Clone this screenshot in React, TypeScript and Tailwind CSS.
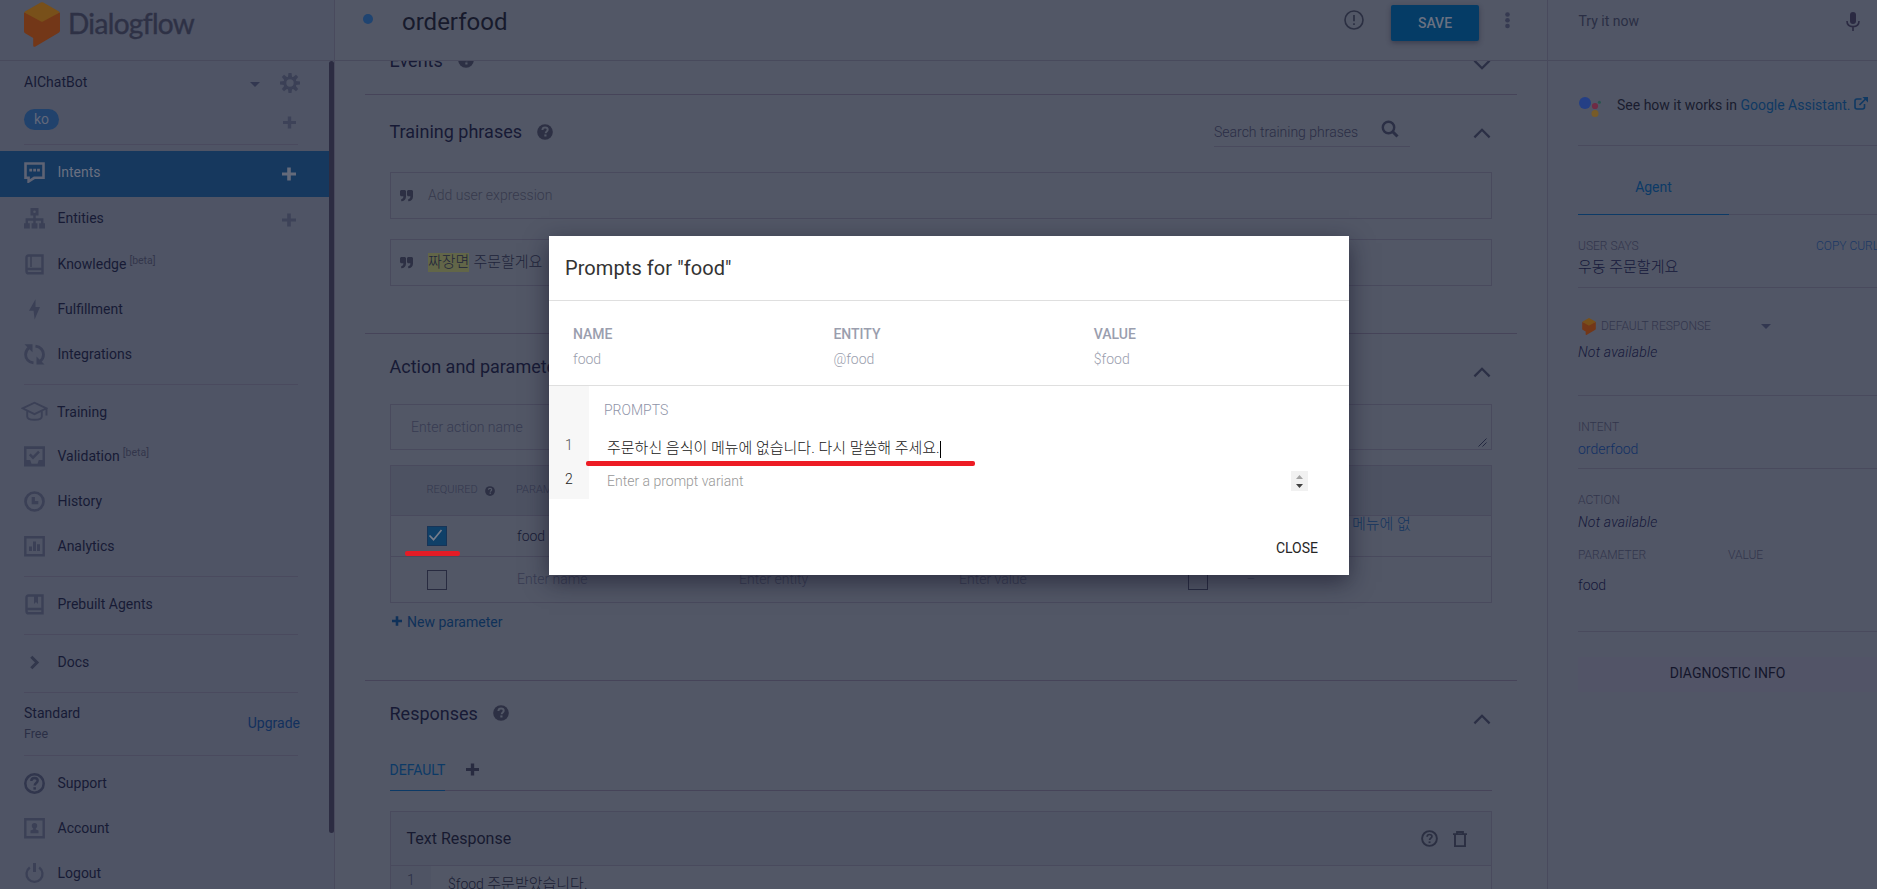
import React from "react";

const ICON = "#3b4056";

function Box({ size = 21, className = "", children }: { size?: number; className?: string; children: React.ReactNode }) {
  return (
    <svg width={size} height={size} viewBox="0 0 21 21" className={`shrink-0 ${className}`} fill="none">
      {children}
    </svg>
  );
}

function Plus({ size = 14, className = "" }: { size?: number; className?: string }) {
  return (
    <svg width={size} height={size} viewBox="0 0 14 14" className={`shrink-0 ${className}`}>
      <path d="M5.2 .5h3.6v4.9H14v3.2H8.8v4.9H5.2V8.6H0V5.4h5.2z" fill="currentColor" />
    </svg>
  );
}

function HelpFilled({ size = 16 }: { size?: number }) {
  return (
    <svg width={size} height={size} viewBox="0 0 16 16" className="shrink-0">
      <circle cx="8" cy="8" r="7.8" fill="#2d3044" />
      <path d="M5.4 6c.1-1.6 1.2-2.4 2.7-2.4 1.5 0 2.6.9 2.6 2.2 0 1.7-2 1.8-2 3.4" fill="none" stroke="#525766" strokeWidth="2" />
      <rect x="7.3" y="10.4" width="2.2" height="2.1" fill="#525766" />
    </svg>
  );
}

function Chevron({ down = false, className = "" }: { down?: boolean; className?: string }) {
  return (
    <svg width="18" height="11" viewBox="0 0 18 11" className={`mr-[0.7px] shrink-0 ${down ? "rotate-180" : ""} ${className}`}>
      <path d="M1.4 9.4 9 1.8l7.6 7.6" fill="none" stroke="#2b2f45" strokeWidth="2.2" />
    </svg>
  );
}

function Quote() {
  return (
    <svg width="14" height="12" viewBox="0 0 14 12" className="shrink-0">
      <path
        d="M1 0h4l1 1v5.500C6 9.500 4 11.300 1.200 11.300V9.200C2.800 9 3.400 8 3.400 6.300H1L0 5.300V1zM8 0h4l1 1v5.500c0 3-2 4.800-4.800 4.800V9.200c1.600-.2 2.200-1.200 2.200-2.900H8l-1-1V1z"
        fill="#2d3044"
      />
    </svg>
  );
}

function Caret({ className = "" }: { className?: string }) {
  return (
    <svg width="10" height="5" viewBox="0 0 10 5" className={`shrink-0 ${className}`}>
      <path d="M0 0h10L5 5z" fill="#323750" />
    </svg>
  );
}

function Cube({ width, height }: { width: number; height: number }) {
  return (
    <svg width={width} height={height} viewBox="0 0 36 45" className="shrink-0">
      <path d="M0 10.500 18 16l18-5.500V28.500q0 1.500-1.300 2.300L11 44.700q-1.800.6-1.800-1.100V36L1.200 31.300Q0 30.500 0 29.200z" fill="#733718" />
      <path d="M.3 10.600Q.5 9.700 1.400 9.200L16.700.5Q18-.2 19.300.5L34.600 9.200q.9.500 1.100 1.400L19 19.600q-1 .5-2 0z" fill="#78501a" />
    </svg>
  );
}

function Gear() {
  const teeth = [0, 45, 90, 135, 180, 225, 270, 315];
  return (
    <Box size={20}>
      {teeth.map((a) => (
        <path key={a} d="M8.9 0h3.200l.6 5H8.300z" fill={ICON} transform={`rotate(${a} 10.5 10.5)`} />
      ))}
      <circle cx="10.500" cy="10.500" r="5.400" stroke={ICON} strokeWidth="3" />
    </Box>
  );
}

const icons: Record<string, React.ReactNode> = {
  intents: (
    <Box>
      <path d="M1.500 1.500h18v14.300H10.200L4.600 19.500v-3.700H1.500z" stroke="#5e6374" strokeWidth="2.600" />
      <path d="M5.300 6.700h2.800v2.800H5.300zM9.200 6.700H12v2.800H9.200zM13.100 6.700h2.800v2.800h-2.800z" fill="#5e6374" />
    </Box>
  ),
  entities: (
    <Box>
      <path d="M6.500 0h8v7.500H6.500z" fill={ICON} />
      <circle cx="10.500" cy="3.700" r="1.300" fill="#4f5465" />
      <path d="M10.500 7v9M2.800 16v-4.500h15.400V16" stroke={ICON} strokeWidth="2.400" />
      <path d="M0 15.200h5.800v5.300H0zM7.600 15.200h5.800v5.300H7.600zM15.200 15.200H21v5.300h-5.800z" fill={ICON} />
    </Box>
  ),
  knowledge: (
    <Box>
      <path d="M4.500 1.500h14v17.800h-14q-2 0-2-2V3.500q0-2 2-2zM3 15h15" stroke={ICON} strokeWidth="2.400" />
      <path d="M7 2v11" stroke={ICON} strokeWidth="1.600" />
    </Box>
  ),
  fulfillment: (
    <Box>
      <path d="M11.500 .2 5 11.800h4.600l1 8.700L16 8h-4.500z" fill={ICON} />
    </Box>
  ),
  integrations: (
    <Box>
      <path d="M9.500 18.900C4.500 18.200 1.600 14.600 1.600 10.500c0-3 1.200-5 3.300-6.600M11.500 2.100c5 .6 8 4.400 8 8.400 0 3-1.300 5.200-3.500 6.900" stroke={ICON} strokeWidth="2.800" />
      <path d="M.5 .3h8v8zM20.500 20.500h-8v-8z" fill={ICON} />
    </Box>
  ),
  training: (
    <svg width="27" height="21" viewBox="0 0 27 21" className="-mx-[3px] shrink-0" fill="none" stroke={ICON} strokeWidth="1.900">
      <path d="M1.500 7.300 13.500 1.700l12 5.600-12 5.900zM6.200 9.500v6q0 3.300 7.300 3.300t7.300-3.300v-6M25.500 7v7.500" />
    </svg>
  ),
  validation: (
    <Box>
      <path d="M0 .3h21v20.200H0zM2.500 3v11h3.700l1.300 3.700h6l1.300-3.700h3.700V3z" fill={ICON} fillRule="evenodd" />
      <path d="m5.800 8.400 3.200 3.300 6-6" stroke={ICON} strokeWidth="2.400" />
    </Box>
  ),
  history: (
    <Box>
      <circle cx="10.500" cy="10.500" r="9" stroke={ICON} strokeWidth="2.700" />
      <path d="M9.300 6v5.700h5" stroke={ICON} strokeWidth="3.200" />
    </Box>
  ),
  analytics: (
    <Box>
      <path d="M1.300 1.300h18.400v18H1.300z" stroke={ICON} strokeWidth="2.400" />
      <path d="M5 10.500h3V15H5zM9 5.500h3V15H9zM13 8.300h3V15h-3z" fill={ICON} />
    </Box>
  ),
  prebuilt: (
    <Box>
      <path d="M4.500 1.500h14v17.800h-14q-2 0-2-2V3.500q0-2 2-2zM3 15h15" stroke={ICON} strokeWidth="2.400" />
      <path d="M10 2h4v8l-2-2-2 2z" fill={ICON} />
    </Box>
  ),
  docs: (
    <Box>
      <path d="m7.300 4.800 5.700 5.700-5.700 5.700" stroke="#32374c" strokeWidth="3" />
    </Box>
  ),
  support: (
    <Box>
      <circle cx="10.500" cy="10.500" r="9.200" stroke="#31364d" strokeWidth="2.500" />
      <path d="M7.300 8c.1-2 1.400-3 3.200-3s3.200 1.100 3.200 2.700c0 2.200-3 2.400-3 4.800" stroke="#31364d" strokeWidth="2.400" />
      <path d="M9.400 14.200h2.500v2.400H9.400z" fill="#31364d" />
    </Box>
  ),
  account: (
    <Box>
      <path d="M1.300 1.300h18.400v18H1.300z" stroke={ICON} strokeWidth="2.400" />
      <circle cx="10.500" cy="7.800" r="2.700" fill={ICON} />
      <path d="M9.200 9.500h2.600v2l2.700 1v2.800h-8v-2.800l2.700-1z" fill={ICON} />
    </Box>
  ),
  logout: (
    <Box>
      <path d="M5.800 4.500a8 8 0 1 0 9.400 0" stroke={ICON} strokeWidth="2.300" />
      <path d="M10.500 0v9" stroke={ICON} strokeWidth="3" />
    </Box>
  ),
};

function NavItem({ icon, label, beta, plus, active }: { icon: string; label: string; beta?: boolean; plus?: boolean; active?: boolean }) {
  return (
    <div
      className={`flex w-[329px] shrink-0 items-center pr-[33px] pb-1 pl-6 ${plus || icon === "knowledge" ? "h-[46px]" : "h-[45px]"} ${
        active ? "bg-[#16385e] text-[#6a7081]" : "text-[#171b35]"
      }`}
    >
      {icons[icon]}
      <span className={icon === "training" ? "mt-px ml-3" : "ml-[12.5px]"}>{label}</span>
      {beta && <span className="-mt-[7px] ml-[3px] text-[10.5px] text-[#33364b]">[beta]</span>}
      {plus && <Plus size={14} className={`mt-1 ml-auto ${active ? "text-[#646a7a]" : "text-[#3d4258]"}`} />}
    </div>
  );
}

function Divider() {
  return <div className="mt-auto ml-6 h-px w-[274px] shrink-0 bg-[#4a4a5e]" />;
}

function Sidebar() {
  return (
    <aside className="flex h-full w-[335px] shrink-0 flex-col border-r border-[#494a5d] bg-[#4f5465]">
      <div className="flex h-[61px] shrink-0 items-start border-b border-[#484a5c] pt-0.5 pl-6">
        <Cube width={36} height={45} />
        <span className="mt-[3px] ml-2 font-[Lato] text-[28px] leading-[36px] tracking-[-0.65px] text-[#2e3145] [-webkit-text-stroke:0.4px_#2e3145]">
          Dialogflow
        </span>
      </div>
      <div className="flex min-h-0 flex-1">
        <nav className="flex w-[329px] shrink-0 flex-col text-[14px]">
          <div className="flex h-[84px] shrink-0 flex-col">
            <div className="flex h-[43px] items-center pl-6 text-[#171b35]">
              <span className="w-[226px]">AIChatBot</span>
              <Caret className="mt-1" />
              <span className="ml-5"><Gear /></span>
            </div>
            <div className="flex items-center pt-[5px] pl-6">
              <span className="flex h-[21px] w-[35px] items-center justify-center rounded-full bg-[#21426c] text-[14px] text-[#62687a]">ko</span>
              <Plus size={13} className="mt-[5px] ml-[224px] text-[#3d4258]" />
            </div>
            <Divider />
          </div>
          <div className="flex h-[240px] shrink-0 flex-col pt-1.5">
            <NavItem icon="intents" label="Intents" plus active />
            <NavItem icon="entities" label="Entities" plus />
            <NavItem icon="knowledge" label="Knowledge" beta />
            <NavItem icon="fulfillment" label="Fulfillment" />
            <NavItem icon="integrations" label="Integrations" />
            <Divider />
          </div>
          <div className="flex h-[192px] shrink-0 flex-col pt-1.5">
            <NavItem icon="training" label="Training" />
            <NavItem icon="validation" label="Validation" beta />
            <NavItem icon="history" label="History" />
            <NavItem icon="analytics" label="Analytics" />
            <Divider />
          </div>
          <div className="flex h-[58px] shrink-0 flex-col pt-[7px]">
            <NavItem icon="prebuilt" label="Prebuilt Agents" />
            <Divider />
          </div>
          <div className="flex h-[58px] shrink-0 flex-col pt-[7px]">
            <NavItem icon="docs" label="Docs" />
            <Divider />
          </div>
          <div className="flex h-[63px] shrink-0 flex-col">
            <div className="flex items-center justify-between pt-2.5 pr-[29px] pl-6">
              <div className="leading-5 text-[#171b35]">
                <div>Standard</div>
                <div className="translate-y-px text-[12.5px] text-[#2b2f45]">Free</div>
              </div>
              <span className="text-[#12305d]">Upgrade</span>
            </div>
            <Divider />
          </div>
          <div className="flex shrink-0 flex-col pt-[7px]">
            <NavItem icon="support" label="Support" />
            <NavItem icon="account" label="Account" />
            <NavItem icon="logout" label="Logout" />
          </div>
        </nav>
        <div className="h-[772px] w-[5px] rounded-full bg-[#2c2c42]" />
      </div>
    </aside>
  );
}

function MainHeader() {
  return (
    <header className="flex h-[61px] shrink-0 items-start border-b border-[#484a5c] pl-7">
      <span className="mt-3.5 size-2.5 rounded-full bg-[#1f4471]" />
      <h1 className="ml-[29px] flex h-[43px] items-center text-[24px] text-[#171a2c]">orderfood</h1>
      <svg width="20" height="20" viewBox="0 0 20 20" className="mt-2.5 ml-auto" fill="none">
        <circle cx="10" cy="10" r="9" stroke="#2b2f42" strokeWidth="1.600" />
        <path d="M10 5v6.300M10 13.200v1.800" stroke="#2b2f42" strokeWidth="1.700" />
      </svg>
      <button className="mt-[5px] ml-[27px] flex h-9 w-[88px] items-center justify-center rounded-[2px] bg-[#053c66] text-[14px] font-medium text-[#6a7181] shadow-[0_2px_5px_rgba(30,30,50,0.45)]">
        SAVE
      </button>
      <svg width="5" height="17" viewBox="0 0 5 17" className="mt-3 mr-[37px] ml-[26px]" fill="#363a51">
        <circle cx="2.500" cy="2.500" r="2.300" />
        <circle cx="2.500" cy="8.300" r="2.300" />
        <circle cx="2.500" cy="14" r="2.300" />
      </svg>
    </header>
  );
}

function Checkbox({ checked = false }: { checked?: boolean }) {
  return (
    <span className={`flex size-5 shrink-0 items-center justify-center border ${checked ? "border-[#173457] bg-[#0f4068]" : "border-[#282b40]"}`}>
      {checked && (
        <svg width="18" height="18" viewBox="0 0 18 18">
          <path d="m1.500 8.500 4 4.200L13.500 3" fill="none" stroke="#777d8b" strokeWidth="1.700" />
        </svg>
      )}
    </span>
  );
}

const sectionTitle = "-ml-[0.5px] text-[18px] text-[#171a35]";

function Main() {
  return (
    <main className="flex h-full w-[1213px] shrink-0 flex-col border-r border-[#494a5d]">
      <MainHeader />
      <div className="flex min-h-0 flex-1 flex-col overflow-hidden px-[30px]">
        <section className="h-[34px] shrink-0 overflow-hidden border-b border-[#464459] px-[25px]">
          <div className="-mt-[21px] flex h-10 items-center">
            <h2 className={sectionTitle}>Events</h2>
            <span className="ml-[15px]"><HelpFilled /></span>
            <Chevron down className="mt-2 ml-auto" />
          </div>
        </section>

        <section className="h-[239px] shrink-0 border-b border-[#464459] px-[25px]">
          <div className="flex h-[73px] items-center">
            <h2 className={sectionTitle}>Training phrases</h2>
            <span className="ml-[15px]"><HelpFilled /></span>
            <div className="mt-1 ml-auto flex h-[27px] w-[196px] items-start border-b border-[#494a5d]">
              <span className="mt-[3px] w-[167px] text-[14px] leading-[18px] font-light text-[#2a2d45]">Search training phrases</span>
              <svg width="18" height="18" viewBox="0 0 18 18" fill="none" stroke="#2b2f45" className="shrink-0">
                <circle cx="7.500" cy="7.500" r="5.700" strokeWidth="2.400" />
                <path d="m11.500 11.500 5 5" strokeWidth="3" />
              </svg>
            </div>
            <Chevron className="mt-1 ml-[63.3px]" />
          </div>
          <div className="mt-1 flex h-[47px] items-center border border-[#494a5d] pl-[9px] text-[14px] font-light text-[#373a4d]">
            <Quote />
            <span className="ml-[14px]">Add user expression</span>
          </div>
          <div className="mt-5 flex h-[47px] items-center border border-[#494a5d] pl-[9px] text-[15px] font-light text-[#20243a]">
            <Quote />
            <span className="ml-[14px] flex h-[19px] items-center bg-[#626648]">짜장면</span>
            <span className="ml-1">주문할게요</span>
          </div>
        </section>

        <section className="h-[347px] shrink-0 border-b border-[#464459] px-[25px]">
          <div className="flex h-[66px] items-center">
            <h2 className={`${sectionTitle} -mt-0.5`}>Action and parameters</h2>
            <Chevron className="mt-2.5 ml-auto" />
          </div>
          <div className="mt-1 flex h-[46px] items-center border border-[#494a5d] pl-5 text-[14px] font-light text-[#373b52]">
            Enter action name
            <svg width="9" height="9" viewBox="0 0 9 9" className="mt-auto mr-1 mb-0.5 ml-auto" stroke="#232840">
              <path d="m.5 8.500 8-8M4.500 8.500l4-4" fill="none" />
            </svg>
          </div>
          <div className="mt-[15px] border border-[#494a5d]">
            <div className="flex h-[50px] items-center border-b border-[#494a5d] bg-[#4d5262] pl-[35.5px] text-[11px] font-light text-[#33374e]">
              <span className="w-[58.5px]">REQUIRED</span>
              <HelpFilled size={10} />
              <span className="ml-[21px]">PARAMETER NAME</span>
            </div>
            <div className="flex h-[41px] items-center border-b border-[#494a5d] pl-9 text-[14px] font-light text-[#171a35]">
              <Checkbox checked />
              <span className="ml-[70px] w-[222px]">food</span>
              <span className="w-[220px]">@food</span>
              <span className="w-[222px]">$food</span>
              <span className="-mt-[23px] ml-[171px] text-[15px] text-[#12355f]">메뉴에 없</span>
            </div>
            <div className="flex h-[45px] items-center pl-9 text-[14px] font-light text-[#373b52]">
              <Checkbox />
              <span className="ml-[70px] w-[222px]">Enter name</span>
              <span className="w-[220px]">Enter entity</span>
              <span className="w-[229px]">Enter value</span>
              <Checkbox />
              <span className="ml-[39px] text-[10px]">—</span>
            </div>
          </div>
          <div className="flex h-[38px] items-center pl-0.5 text-[14px] text-[#0f3159]">
            <Plus size={10} className="-mt-0.5" />
            <span className="ml-[5px]">New parameter</span>
          </div>
        </section>

        <section className="px-[25px]">
          <div className="flex h-[66px] items-center">
            <h2 className={`${sectionTitle} -mt-0.5`}>Responses</h2>
            <span className="-mt-0.5 ml-[15px]"><HelpFilled /></span>
            <Chevron className="mt-2.5 ml-auto" />
          </div>
          <div className="flex h-11 items-stretch border-b border-[#464459]">
            <span className="-mb-px flex w-[55px] items-center border-b border-[#0c3a66] pt-[3px] text-[14px] text-[#0c3a66]">
              <span className="-ml-[0.5px]">DEFAULT</span>
            </span>
            <Plus size={13} className="mt-4 ml-[21px] text-[#282b40]" />
          </div>
          <div className="mt-5 border border-[#494a5d]">
            <div className="flex h-[54px] items-center border-b border-[#494a5d] bg-[#4f5464] pr-6 pl-[15.5px] text-[16px] text-[#171a30]">
              Text Response
              <svg width="17" height="17" viewBox="0 0 17 17" className="ml-auto" fill="none" stroke="#2b2f42">
                <circle cx="8.500" cy="8.500" r="7.400" strokeWidth="1.900" />
                <path d="M6.100 6.700c.1-1.500 1.100-2.200 2.400-2.200s2.400.8 2.400 2c0 1.600-2.300 1.700-2.300 3.600" strokeWidth="1.700" />
                <path d="M7.600 11.400h1.900v1.700H7.600z" fill="#2b2f42" stroke="none" />
              </svg>
              <svg width="14" height="16" viewBox="0 0 14 16" className="ml-[15px]" fill="none" stroke="#2b2f42">
                <path d="M2 3.500v11.600h10V3.500" strokeWidth="1.900" />
                <path d="M0 3.200h14M4 3V1h6v2" strokeWidth="1.800" />
              </svg>
            </div>
            <div className="flex h-24 text-[14px] font-light text-[#1a1d33]">
              <span className="w-10 bg-[#4f5464] pt-1 pl-4 text-[#2b2f45]">1</span>
              <span className="pt-[7px] pl-[17px]">
                $food <span className="text-[15px]">주문받았습니다.</span>
              </span>
            </div>
          </div>
        </section>
      </div>
    </main>
  );
}

const label = "h-4 text-[12px] leading-4 font-light text-[#31354c]";
const value = "h-5 leading-5 font-light text-[#15183a]";

function TryPanel() {
  return (
    <aside className="flex h-full min-w-0 flex-1 flex-col overflow-hidden bg-[#515666]">
      <div className="flex h-[61px] shrink-0 items-start border-b border-[#484a5c] pr-[17px] pl-[30.5px]">
        <span className="flex h-[42px] items-center text-[14px] text-[#2a2e44]">Try it now</span>
        <svg width="14" height="19" viewBox="0 0 14 19" className="mt-3 ml-auto" fill="none">
          <rect x="4" y="0" width="6" height="12" rx="3" fill="#2b2a42" />
          <path d="M1 9c0 3.500 2.500 5.600 6 5.600S13 12.500 13 9M7 14.500V19" stroke="#2b2a42" strokeWidth="1.600" />
        </svg>
      </div>
      <div className="flex min-h-0 flex-1 flex-col pl-[30px]">
        <div className="flex h-[85px] shrink-0 items-center border-b border-[#494a5d] pt-1 text-[14px] whitespace-nowrap text-[#191c2e]">
          <svg width="23" height="21" viewBox="0 0 23 21" className="mt-1 ml-px shrink-0">
            <circle cx="6" cy="6" r="6" fill="#243f85" />
            <circle cx="16" cy="9" r="3.100" fill="#6f2b45" />
            <circle cx="20.400" cy="5.300" r="1.500" fill="#28554f" />
            <circle cx="16" cy="16.500" r="3.500" fill="#775b28" />
          </svg>
          <span className="ml-[15px]">
            See how it works in <span className="text-[#0f3963]">Google Assistant.</span>
          </span>
          <svg width="14" height="13" viewBox="0 0 14 13" className="-mt-1 ml-[3px] shrink-0" fill="none" stroke="#0f3963">
            <path d="M7.500 2H3Q1 2 1 4v6q0 2 2 2h5.500q2 0 2-2V7M5.500 8 12 1.500" strokeWidth="1.600" />
            <path d="M8.500 0H14v5.500z" fill="#0f3963" stroke="none" />
          </svg>
        </div>
        <div className="flex h-[69px] shrink-0 border-b border-[#494a5d]">
          <span className="-mb-px flex w-[151px] items-center justify-center border-b border-[#0c3a66] pt-3.5 text-[14px] text-[#0c3a66]">Agent</span>
        </div>
        <div className="h-[73px] shrink-0 border-b border-[#494a5d] pt-[23px]">
          <div className="flex">
            <span className={`${label} w-[238px] shrink-0`}>USER SAYS</span>
            <span className="text-[12px] leading-4 font-light whitespace-nowrap text-[#1b3865]">COPY CURL</span>
          </div>
          <div className={`${value} mt-[3px] text-[15px]`}>우동 주문할게요</div>
        </div>
        <div className="h-[108px] shrink-0 border-b border-[#494a5d] pt-[29px]">
          <div className="flex h-[18px] items-center pl-1">
            <Cube width={14} height={17} />
            <span className={`${label} ml-[5px] w-[160px]`}>DEFAULT RESPONSE</span>
            <Caret />
          </div>
          <div className={`${value} mt-[7px] text-[14px] tracking-[0.2px] italic`}>Not available</div>
        </div>
        <div className="h-[73px] shrink-0 border-b border-[#494a5d] pt-[23px]">
          <div className={label}>INTENT</div>
          <div className="mt-1 h-5 text-[14px] leading-5 font-light text-[#123064]">orderfood</div>
        </div>
        <div className="h-[163px] shrink-0 border-b border-[#494a5d] pt-[23px]">
          <div className={label}>ACTION</div>
          <div className={`${value} mt-1 text-[14px] tracking-[0.2px] italic`}>Not available</div>
          <div className="mt-[15px] flex">
            <span className={`${label} w-[150px]`}>PARAMETER</span>
            <span className={label}>VALUE</span>
          </div>
          <div className={`${value} mt-3 text-[14px]`}>food</div>
        </div>
        <button className="mt-[25px] flex h-[35px] shrink-0 items-center justify-center bg-[#525467] pb-0.5 text-[14px] text-[#14162b]">
          DIAGNOSTIC INFO
        </button>
      </div>
    </aside>
  );
}

function Column({ title, text }: { title: string; text: string }) {
  return (
    <div className="w-[260.4px] shrink-0 text-[14px] text-[#9a9eae]">
      <div className="h-[25px] leading-[25px] font-medium">{title}</div>
      <div className="h-[25px] leading-[25px] font-light">{text}</div>
    </div>
  );
}

function PromptsDialog() {
  return (
    <div className="absolute top-[236px] left-[549px] flex h-[339px] w-[800px] flex-col bg-white shadow-[0_7px_22px_rgba(20,20,40,0.6)]">
      <div className="flex h-[65px] shrink-0 items-center border-b border-[#dfdfdf] pl-4 text-[20px] tracking-[0.08px] text-[#333]">Prompts for "food"</div>
      <div className="flex h-[85px] shrink-0 border-b border-[#dfdfdf] pt-[21px] pl-6">
        <Column title="NAME" text="food" />
        <Column title="ENTITY" text="@food" />
        <Column title="VALUE" text="$food" />
      </div>
      <div className="flex h-[113px] shrink-0 text-[14px] font-light">
        <div className="w-10 bg-[#f7f7f7] pt-[47px] pl-4 text-[#555]">
          <div className="h-[34px] leading-6">1</div>
          <div className="h-6 leading-6 text-[#222]">2</div>
        </div>
        <div className="flex flex-1 flex-col pt-3 pr-[41px] pl-[18px]">
          <div className="h-6 leading-6 text-[#8f94a8]"><span className="-ml-[3px]">PROMPTS</span></div>
          <div className="mt-3.5 flex h-6 items-center text-[15px] text-[#161616]">
            <span>주문하신 음식이 메뉴에 없습니다. 다시 말씀해 주세요.</span>
            <span className="mt-0.5 h-[17px] w-px bg-black" />
          </div>
          <div className="mt-[9px] flex h-6 items-center justify-between text-[#979797]">
            <span>Enter a prompt variant</span>
            <span className="flex h-5 w-[17px] flex-col items-center justify-center gap-[5px] bg-[#f1f1f1]">
              <svg width="7" height="4" viewBox="0 0 7 4"><path d="M0 4 3.500 0 7 4z" fill="#a3a3a3" /></svg>
              <svg width="7" height="4" viewBox="0 0 7 4"><path d="M0 0h7L3.500 4z" fill="#404040" /></svg>
            </span>
          </div>
        </div>
      </div>
      <div className="mt-auto mr-[31px] mb-[15px] self-end text-[14px] leading-6 text-[#262626]">CLOSE</div>
    </div>
  );
}

export default function App() {
  return (
    <div className="relative flex h-[889px] w-[1877px] overflow-hidden bg-[#525766] font-[Roboto,'Noto_Sans_CJK_KR',sans-serif]">
      <Sidebar />
      <Main />
      <TryPanel />
      <PromptsDialog />
      <div className="absolute top-[461px] left-[586px] h-[5px] w-[389px] rounded-[2px] bg-[#ed1c24]" />
      <div className="absolute top-[551px] left-[405px] h-[5px] w-[55px] rounded-[2px] bg-[#e51c26]" />
    </div>
  );
}
